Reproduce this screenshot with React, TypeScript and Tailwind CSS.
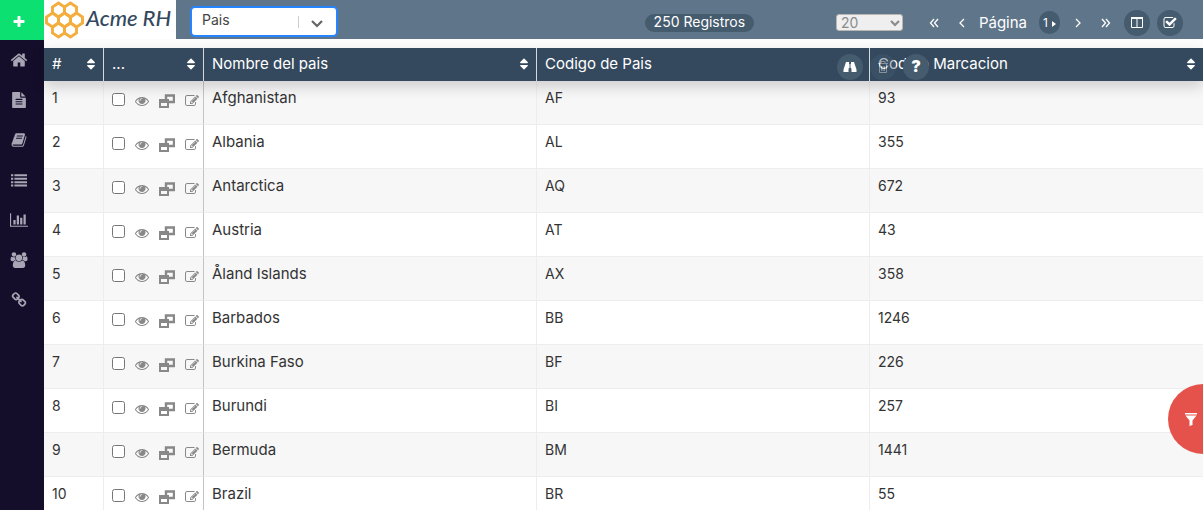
import React from "react";
import { FaSort } from "react-icons/fa";

type IconProps = { className?: string };

function Glyph({ d, box = "0 0 1792 1792", className }: { d: string; box?: string; className?: string }) {
  return (
    <svg viewBox={box} className={className} fill="currentColor" aria-hidden="true">
      <path d={d} />
    </svg>
  );
}

const PLUS =
  "M1600 736v192q0 40-28 68t-68 28h-416v416q0 40-28 68t-68 28h-192q-40 0-68-28t-28-68v-416h-416q-40 0-68-28t-28-68v-192q0-40 28-68t68-28h416v-416q0-40 28-68t68-28h192q40 0 68 28t28 68v416h416q40 0 68 28t28 68z";
const HOME =
  "M1472 992v480q0 26-19 45t-45 19h-384v-384h-256v384h-384q-26 0-45-19t-19-45v-480q0-1 .5-3t.5-3l575-474 575 474q1 2 1 6zm223-69l-62 74q-8 9-21 11h-3q-13 0-21-7l-692-577-692 577q-12 8-24 7-13-2-21-11l-62-74q-8-10-7-23.5t11-21.5l719-599q32-26 76-26t76 26l244 204v-195q0-14 9-23t23-9h192q14 0 23 9t9 23v408l219 182q10 8 11 21.5t-7 23.5z";
const FILE =
  "M1596 476q14 14 28 36h-472v-472q22 14 36 28zm-476 164h544v1056q0 40-28 68t-68 28h-1344q-40 0-68-28t-28-68v-1600q0-40 28-68t68-28h800v544q0 40 28 68t68 28zm160 736v-64q0-14-9-23t-23-9h-704q-14 0-23 9t-9 23v64q0 14 9 23t23 9h704q14 0 23-9t9-23zm0-256v-64q0-14-9-23t-23-9h-704q-14 0-23 9t-9 23v64q0 14 9 23t23 9h704q14 0 23-9t9-23zm0-256v-64q0-14-9-23t-23-9h-704q-14 0-23 9t-9 23v64q0 14 9 23t23 9h704q14 0 23-9t9-23z";
const BOOK =
  "M1703 478q40 57 18 129l-275 906q-19 64-76.5 107.5t-122.5 43.5h-923q-77 0-148.5-53.5t-99.5-131.5q-24-67-2-127 0-4 3-27t4-37q1-8-3-21.5t-3-19.5q2-11 8-21t16.5-23.5 16.5-23.5q23-38 45-91.5t30-91.5q3-10 .5-30t-.5-28q3-11 17-28t17-23q21-36 42-92t25-90q1-9-2.5-32t.5-28q4-13 22-30.5t22-22.5q19-26 42.5-84.5t27.5-96.5q1-8-3-25.5t-2-26.5q2-8 9-18t18-23 17-21q8-12 16.5-30.5t15-35 16-36 19.5-32 26.5-23.5 36-11.5 47.5 5.5l-1 3q38-9 51-9h761q74 0 114 56t18 130l-274 906q-36 119-71.5 153.5t-128.5 34.5h-869q-27 0-38 15-11 16-1 43 24 70 144 70h923q29 0 56-15.5t35-41.5l300-987q7-22 5-57 38 15 59 43zm-1064 2q-4 13 2 22.5t20 9.5h608q13 0 25.5-9.5t16.5-22.5l21-64q4-13-2-22.5t-20-9.5h-608q-13 0-25.5 9.5t-16.5 22.5zm-83 256q-4 13 2 22.5t20 9.5h608q13 0 25.5-9.5t16.5-22.5l21-64q4-13-2-22.5t-20-9.5h-608q-13 0-25.5 9.5t-16.5 22.5z";
const LIST =
  "M0 256h256v224h-256zM0 640h256v224h-256zM0 1024h256v224h-256zM0 1408h256v224h-256zM384 256h1408v224h-1408zM384 640h1408v224h-1408zM384 1024h1408v224h-1408zM384 1408h1408v224h-1408z";
const CHART =
  "M640 896v512h-256v-512zM1024 384v1024h-256v-1024zM2048 1536v128h-2048v-1536h128v1408zM1408 640v768h-256v-768zM1792 256v1152h-256v-1152z";
const USERS =
  "M657 896q-162 5-265 128h-134q-82 0-138-40.5t-56-118.5q0-353 124-353 6 0 43.5 21t97.5 42.5 119 21.5q67 0 133-23-5 37-5 66 0 159 93 290zm1071 637q0 120-73 189.5t-194 69.5h-874q-121 0-194-69.5t-73-189.5q0-53 3.5-103.5t14-109 26.500-108.500 43-97.5 62-81 85.5-53.5 111.5-20q10 0 43 21.5t73 48 107 48 135 21.5 135-21.5 107-48 73-48 43-21.5q61 0 111.5 20t85.5 53.5 62 81 43 97.5 26.5 108.5 14 109 3.5 103.5zm-1024-1277q0 106-75 181t-181 75-181-75-75-181 75-181 181-75 181 75 75 181zm704 384q0 159-112.5 271.5t-271.5 112.5-271.5-112.5-112.5-271.5 112.5-271.5 271.5-112.5 271.5 112.5 112.5 271.5zm576 225q0 78-56 118.5t-138 40.5h-134q-103-123-265-128 93-131 93-290 0-29-5-66 66 23 133 23 59 0 119-21.5t97.5-42.5 43.5-21q124 0 124 353zm-128-609q0 106-75 181t-181 75-181-75-75-181 75-181 181-75 181 75 75 181z";
const LINK =
  "M1520 1216q0-40-28-68l-208-208q-28-28-68-28-42 0-72 32 3 3 19 18.5t21.5 21.5 15 19 13 25.5 3.5 27.5q0 40-28 68t-68 28q-15 0-27.5-3.5t-25.5-13-19-15-21.5-21.5-18.5-19q-33 31-33 73 0 40 28 68l206 207q27 27 68 27 40 0 68-26l147-146q28-28 28-67zm-703-705q0-40-28-68l-206-207q-28-28-68-28-39 0-68 27l-147 146q-28 28-28 67 0 40 28 68l208 208q27 27 68 27 42 0 72-31-3-3-19-18.5t-21.5-21.5-15-19-13-25.5-3.5-27.5q0-40 28-68t68-28q15 0 27.5 3.5t25.5 13 19 15 21.5 21.5 18.5 19q33-31 33-73zm895 705q0 120-85 203l-147 146q-83 83-203 83-121 0-204-85l-206-207q-83-83-83-203 0-123 88-209l-88-88q-86 88-208 88-120 0-204-84l-208-208q-84-84-84-204t85-203l147-146q83-83 203-83 121 0 204 85l206 207q83 83 83 203 0 123-88 209l88 88q86-88 208-88 120 0 204 84l208 208q84 84 84 204z";
const EYE =
  "M1664 960q-152-236-381-353 61 104 61 225 0 185-131.5 316.5t-316.5 131.5-316.5-131.5-131.5-316.5q0-121 61-225-229 117-381 353 133 205 333.5 326.5t434.5 121.5 434.5-121.5 333.5-326.5zm-720-384q0-20-14-34t-34-14q-125 0-214.5 89.5t-89.5 214.5q0 20 14 34t34 14 34-14 14-34q0-86 61-147t147-61q20 0 34-14t14-34zm848 384q0 34-20 69-140 230-376.5 368.5t-499.5 138.5-499.5-139-376.5-368q-20-35-20-69t20-69q140-229 376.5-368t499.5-139 499.5 139 376.5 368q20 35 20 69z";
const EDIT =
  "M888 1184l116-116-152-152-116 116v56h96v96h56zm440-720q-16-16-33 1l-350 350q-17 17-1 33t33-1l350-350q17-17 1-33zm80 594v190q0 119-84.5 203.5t-203.5 84.5h-832q-119 0-203.5-84.5t-84.5-203.5v-832q0-119 84.5-203.5t203.5-84.5h832q63 0 117 25 15 7 18 23 3 17-9 29l-49 49q-14 14-32 8-23-6-45-6h-832q-66 0-113 47t-47 113v832q0 66 47 113t113 47h832q66 0 113-47t47-113v-126q0-13 9-22l64-64q15-15 35-7t20 29zm-96-738l288 288-672 672h-288v-288zm444 132l-92 92-288-288 92-92q28-28 68-28t68 28l152 152q28 28 28 68t-28 68z";
const CHECK =
  "M1472 930v318q0 119-84.5 203.5t-203.5 84.5h-832q-119 0-203.5-84.5t-84.5-203.5v-832q0-119 84.5-203.5t203.5-84.5h832q63 0 117 25 15 7 18 23 3 17-9 29l-49 49q-10 10-23 10-3 0-9-2-23-6-45-6h-832q-66 0-113 47t-47 113v832q0 66 47 113t113 47h832q66 0 113-47t47-113v-254q0-13 9-22l64-64q10-10 23-10 6 0 12 3 20 8 20 29zm231-489l-814 814q-24 24-57 24t-57-24l-430-430q-24-24-24-57t24-57l110-110q24-24 57-24t57 24l263 263 647-647q24-24 57-24t57 24l110 110q24 24 24 57t-24 57z";

function Chevrons({ paths, className }: { paths: string } & IconProps) {
  return (
    <svg viewBox="0 0 10 10" className={className} fill="none" stroke="currentColor" strokeWidth="1.3" aria-hidden="true">
      <path d={paths} />
    </svg>
  );
}

function Restore({ className }: IconProps) {
  return (
    <svg viewBox="0 0 16 14" className={className} fill="none" stroke="currentColor" strokeWidth="2" aria-hidden="true">
      <path d="M7 6V1.500h8V8h-5" strokeWidth="2.400" />
      <path d="M1 6h8v7H1z" />
      <path d="M0 7h10" strokeWidth="4" />
    </svg>
  );
}

function Binoculars({ className }: IconProps) {
  return (
    <svg viewBox="0 0 14 12" className={className} fill="currentColor" aria-hidden="true">
      <path d="M3 1h3v6.500H5.500V11H.5V8.500zM8 1h3l2.500 7.500V11h-5V7.500H8zM6.500 3h1v4h-1z" />
    </svg>
  );
}

const cells = [
  [14.5, 9],
  [26.5, 9],
  [8.5, 19],
  [20.5, 19],
  [32.5, 19],
  [14.5, 29],
  [26.5, 29],
];

function LogoMark({ className }: IconProps) {
  return (
    <svg viewBox="0 0 41 38" className={className} fill="none" stroke="#f3ae3d" strokeWidth="2.900" aria-hidden="true">
      {cells.map(([x, y]) => (
        <path key={x + "-" + y} d={`M${x} ${y - 7}l6 4v6l-6 4l-6-4v-6z`} />
      ))}
    </svg>
  );
}

const menu = [
  { label: "Inicio", d: HOME, box: "0 0 1792 1792", size: "size-[18px]" },
  { label: "Documentos", d: FILE, box: "0 0 1792 1792", size: "size-4" },
  { label: "Catálogos", d: BOOK, box: "0 0 1792 1792", size: "size-4" },
  { label: "Listas", d: LIST, box: "0 0 1792 1792", size: "size-4" },
  { label: "Gráficas", d: CHART, box: "0 0 2048 1792", size: "h-4 w-[18px]" },
  { label: "Usuarios", d: USERS, box: "0 0 2048 1792", size: "h-4 w-[18px]" },
  { label: "Enlaces", d: LINK, box: "0 0 1792 1792", size: "size-4" },
];

const rows = [
  ["Afghanistan", "AF", "93"],
  ["Albania", "AL", "355"],
  ["Antarctica", "AQ", "672"],
  ["Austria", "AT", "43"],
  ["Åland Islands", "AX", "358"],
  ["Barbados", "BB", "1246"],
  ["Burkina Faso", "BF", "226"],
  ["Burundi", "BI", "257"],
  ["Bermuda", "BM", "1441"],
  ["Brazil", "BR", "55"],
];

const columns = [
  { title: "#", sort: true },
  { title: "...", sort: true },
  { title: "Nombre del pais", sort: true },
  { title: "Codigo de Pais", sort: false },
  { title: "Codigo Marcacion", sort: true },
];

function Sidebar() {
  return (
    <aside className="flex w-11 shrink-0 flex-col bg-[#150e2b]">
      <button aria-label="Agregar" className="flex h-10 shrink-0 items-center justify-center bg-[#0be070] pr-1.5 text-white">
        <Glyph d={PLUS} className="mt-1 size-3.5" />
      </button>
      <nav className="flex flex-col gap-4 pt-2">
        {menu.map((m) => (
          <a key={m.label} href="#" aria-label={m.label} className="flex h-6 w-[38px] items-center justify-center text-[#a8a6b5]">
            <Glyph d={m.d} box={m.box} className={m.size} />
          </a>
        ))}
      </nav>
    </aside>
  );
}

function TopBar() {
  return (
    <header className="relative flex h-[39px] shrink-0 items-center bg-[#5f7589] text-white">
      <a href="#" className="flex h-full w-[132px] shrink-0 items-center gap-px bg-white text-[#34495e]">
        <LogoMark className="h-[38px] w-[41px]" />
        <span className="pb-1 font-['Lato'] text-[22px] font-medium whitespace-nowrap italic">Acme RH</span>
      </a>
      <div className="relative mt-1 ml-[14px] h-[31px] w-[148px] shrink-0">
        <select
          aria-label="Catálogo"
          className="h-full w-full appearance-none rounded-[5px] border-2 border-[#2684ff] bg-white pb-1 pl-2.5 text-sm text-[#444] outline-none"
        >
          <option>Pais</option>
        </select>
        <span className="pointer-events-none absolute top-[10px] right-[39px] h-3 w-px bg-[#ccc]" />
        <svg viewBox="0 0 12 8" className="pointer-events-none absolute top-[14px] right-[15px] h-2 w-3" fill="none" stroke="#666" strokeWidth="2.200" aria-hidden="true">
          <path d="M1 1l5 5 5-5" />
        </svg>
      </div>
      <div className="ml-auto flex shrink-0 items-center pt-1.5 pr-5">
        <span className="mr-[82px] flex h-[18px] w-[109px] items-center justify-center rounded-full bg-[#455b6e] pb-px text-sm whitespace-nowrap">
          250 Registros
        </span>
        <div className="relative h-[17px] w-[67px]">
          <select aria-label="Registros por página" disabled className="block h-full w-full appearance-none rounded-[3px] border border-[#b9b5b3] bg-[#efefef] pl-1 text-sm leading-none text-[#8b8b8b] opacity-100">
            <option>20</option>
          </select>
          <svg viewBox="0 0 10 7" className="pointer-events-none absolute top-[6px] right-[3px] h-[7px] w-2.5" fill="none" stroke="#8b8b8b" strokeWidth="2.200" aria-hidden="true">
            <path d="M1 1l4 4 4-4" />
          </svg>
        </div>
        <button aria-label="Primera página" className="ml-[26px]">
          <Chevrons paths="M5 1L1.500 5L5 9M9 1L5.500 5L9 9" className="size-2.5" />
        </button>
        <button aria-label="Página anterior" className="ml-[18px]">
          <Chevrons paths="M7 1L3 5L7 9" className="size-2.5" />
        </button>
        <span className="mx-3 text-[15px] leading-5">Página</span>
        <button aria-label="Elegir página" className="flex h-[23px] w-[21px] items-center justify-center gap-1 rounded-full bg-[#455b6e] text-xs">
          1
          <svg viewBox="0 0 4 6" className="mt-0.5 h-1.5 w-1" fill="currentColor" aria-hidden="true">
            <path d="M0 0l4 3-4 3z" />
          </svg>
        </button>
        <button aria-label="Página siguiente" className="ml-[13px]">
          <Chevrons paths="M3 1L7 5L3 9" className="size-2.5" />
        </button>
        <button aria-label="Última página" className="ml-[18px]">
          <Chevrons paths="M1 1L4.500 5L1 9M5 1L8.500 5L5 9" className="size-2.5" />
        </button>
        <button aria-label="Columnas" className="ml-[13px] flex size-[26px] items-center justify-center rounded-full bg-[#455b6e]">
          <svg viewBox="0 0 12 11" className="h-[11px] w-3" fill="none" stroke="currentColor" aria-hidden="true">
            <path d="M.5 1v9.500h11V1M6 1v9.500" />
            <path d="M0 1h12" strokeWidth="2" />
          </svg>
        </button>
        <button aria-label="Seleccionar todo" className="ml-[7px] flex size-[26px] items-center justify-center rounded-full bg-[#455b6e]">
          <Glyph d={CHECK} className="size-3.5" />
        </button>
      </div>
      <div className="absolute top-[54px] right-[274px] z-20 flex gap-[7px]">
        <button aria-label="Buscar" className="flex size-[26px] items-center justify-center rounded-full bg-[#455b6e]">
          <Binoculars className="h-3 w-3.5" />
        </button>
        <button aria-label="Eliminar" disabled className="flex size-[26px] items-center justify-center rounded-full bg-[#455b6e] opacity-40">
          <svg viewBox="0 0 10 12" className="h-3 w-2.5" fill="none" stroke="currentColor" aria-hidden="true">
            <path d="M0 2.500h10M3 2V.5h4V2M1.500 3v8.500h7V3M3.500 5v5M5 5v5M6.500 5v5" />
          </svg>
        </button>
        <button aria-label="Ayuda" className="flex size-[26px] items-center justify-center rounded-full bg-[#455b6e] pb-0.5 text-base font-black">
          ?
        </button>
      </div>
    </header>
  );
}

function CountryTable() {
  return (
    <table className="w-full table-fixed border-separate border-spacing-0 text-sm text-[#333]">
      <colgroup>
        <col className="w-[60px]" />
        <col className="w-[100px]" />
        <col />
        <col />
        <col />
      </colgroup>
      <thead className="relative z-10 shadow-[0_6px_14px_rgba(0,0,0,0.16)]">
        <tr>
          {columns.map((c) => (
            <th key={c.title} scope="col" className="h-[33px] border-r border-[#d5dade] bg-[#34495e] py-0 pr-[5px] pl-2 text-left text-[15px] leading-5 font-normal text-white last:border-r-0">
              <div className="flex items-center justify-between pb-0.5">
                <span>{c.title}</span>
                {c.sort && <FaSort className="size-3.5" />}
              </div>
            </th>
          ))}
        </tr>
      </thead>
      <tbody>
        {rows.map(([name, code, dial], i) => (
          <tr key={code} className="h-11 odd:bg-[#f7f7f7] even:bg-white">
            <td className="border-r border-b border-[#ededed] px-2 pb-2.5">{i + 1}</td>
            <td className="border-r border-b border-r-[#c4c4c4] border-b-[#ededed] px-2 pb-1.5">
              <div className="flex items-center text-[#888]">
                <input type="checkbox" aria-label={"Seleccionar " + name} className="size-[13px] shrink-0" />
                <button aria-label={"Ver " + name} className="ml-2.5 shrink-0 pt-0.5">
                  <Glyph d={EYE} className="size-3.5" />
                </button>
                <button aria-label={"Abrir " + name} className="ml-2.5 shrink-0 pt-0.5">
                  <Restore className="h-3.5 w-4" />
                </button>
                <button aria-label={"Editar " + name} className="ml-2.5 shrink-0 pt-0.5">
                  <Glyph d={EDIT} className="size-3.5" />
                </button>
              </div>
            </td>
            <td className="border-r border-b border-[#ededed] px-2 pb-2.5 text-[15px] leading-5">{name}</td>
            <td className="border-r border-b border-[#ededed] px-2 pb-2.5">{code}</td>
            <td className="border-b border-[#ededed] px-2 pb-2.5">{dial}</td>
          </tr>
        ))}
      </tbody>
    </table>
  );
}

export default function App() {
  return (
    <div className="relative flex h-screen overflow-hidden bg-[#fcfcfc] font-['Inter',sans-serif]">
      <Sidebar />
      <main className="flex min-w-0 flex-1 flex-col">
        <TopBar />
        <div className="pt-[9px]">
          <CountryTable />
        </div>
      </main>
      <button aria-label="Filtrar" className="absolute top-96 -right-9 z-30 flex h-[70px] w-[71px] items-center rounded-full bg-[#e4524b] pl-[17px] text-white">
        <svg viewBox="0 0 12 13" className="h-[13px] w-3" fill="currentColor" aria-hidden="true">
          <path d="M0 0h12v1.500H0zM.5 2.500h11L7.500 7.500V12L4.500 13V7.500z" />
        </svg>
      </button>
    </div>
  );
}
